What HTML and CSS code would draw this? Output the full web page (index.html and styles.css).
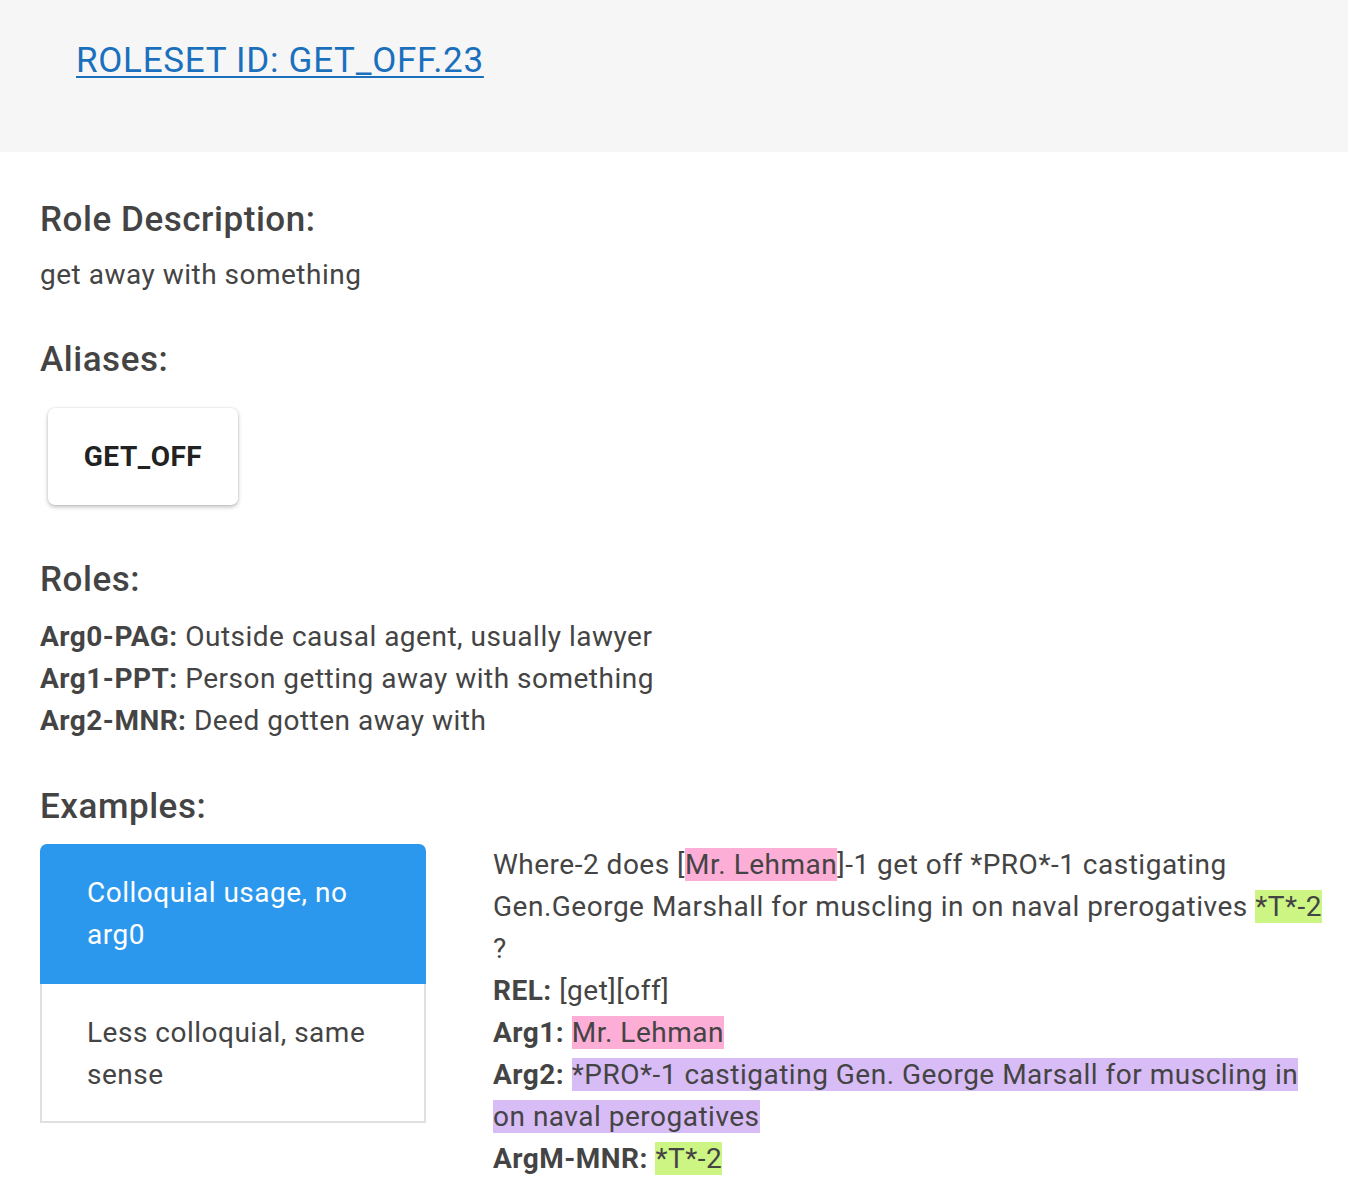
FILE: index.html
```html
<!DOCTYPE html>
<html lang="en">
<head>
<meta charset="utf-8">
<title>Roleset get_off.23</title>
<link rel="stylesheet" href="styles.css">
</head>
<body>
<header class="top">
  <a class="roleset-link" href="#">ROLESET ID: GET_OFF.23</a>
</header>
<main class="content">
  <h2 class="sec-title first">Role Description:</h2>
  <p class="desc">get away with something</p>

  <h2 class="sec-title">Aliases:</h2>
  <div class="aliases">
    <div class="alias-chip">GET_OFF</div>
  </div>

  <h2 class="sec-title roles-title">Roles:</h2>
  <ul class="roles">
    <li><b>Arg0-PAG:</b> Outside causal agent, usually lawyer</li>
    <li><b>Arg1-PPT:</b> Person getting away with something</li>
    <li><b>Arg2-MNR:</b> Deed gotten away with</li>
  </ul>

  <h2 class="sec-title examples-title">Examples:</h2>
  <div class="examples">
    <ul class="ex-list">
      <li class="ex-item active">Colloquial usage, no arg0</li>
      <li class="ex-item">Less colloquial, same sense</li>
    </ul>
    <div class="ex-body">
      <p class="ex-line">Where-2 does [<span class="hl-pink">Mr. Lehman</span>]-1 get off *PRO*-1 castigating Gen.George Marshall for muscling in on naval prerogatives <span class="hl-green">*T*-2</span> ?</p>
      <p class="ex-line"><b>REL:</b> [get][off]</p>
      <p class="ex-line"><b>Arg1:</b> <span class="hl-pink">Mr. Lehman</span></p>
      <p class="ex-line"><b>Arg2:</b> <span class="hl-purple">*PRO*-1 castigating Gen. George Marsall for muscling in on naval perogatives</span></p>
      <p class="ex-line"><b>ArgM-MNR:</b> <span class="hl-green">*T*-2</span></p>
    </div>
  </div>
</main>
</body>
</html>
```

FILE: styles.css
```css
* {
  box-sizing: border-box;
}

html, body {
  margin: 0;
  padding: 0;
  background: #ffffff;
}

body {
  font-family: Roboto, "Liberation Sans", sans-serif;
  color: #444444;
  letter-spacing: 0.5px;
}

.top {
  height: 152px;
  background: #f6f6f6;
  padding: 40px 0 0 76px;
}

.roleset-link {
  font-size: 35px;
  line-height: 42px;
  font-weight: 400;
  letter-spacing: 0.72px;
  color: #1a70bd;
  text-decoration: underline;
  text-decoration-thickness: 2px;
  text-underline-offset: 4px;
}

.content {
  padding: 0 20px 0 40px;
}

.sec-title {
  margin: 0;
  font-size: 35px;
  line-height: 42px;
  font-weight: 500;
  letter-spacing: 0.55px;
  color: #444444;
}

.sec-title.first {
  margin-top: 47px;
}

.desc {
  margin: 13px 0 43px;
  font-size: 28px;
  line-height: 42px;
}

.aliases {
  display: flex;
  margin: 27px 0 0 8px;
}

.alias-chip {
  width: 190px;
  height: 97px;
  display: flex;
  align-items: center;
  justify-content: center;
  background: #ffffff;
  border-radius: 7px;
  box-shadow: 0 2px 4px rgba(0, 0, 0, 0.25), 0 0 2px rgba(0, 0, 0, 0.12);
  font-size: 28px;
  font-weight: 700;
  color: #222222;
}

.roles-title {
  margin-top: 54px;
}

.roles {
  list-style: none;
  margin: 15px 0 44px;
  padding: 0;
  font-size: 28px;
  line-height: 42px;
}

.roles b {
  font-weight: 700;
}

.examples {
  display: flex;
  align-items: flex-start;
  gap: 67px;
  margin-top: 16px;
}

.ex-list {
  list-style: none;
  margin: 0;
  padding: 0;
  width: 386px;
  flex: none;
  font-size: 28px;
  line-height: 42px;
}

.ex-item {
  padding: 28px 40px 25px 45px;
  border: 2px solid #e0e0e0;
  border-top: none;
  color: #444444;
}

.ex-item.active {
  background: #2b98ee;
  border: 0;
  padding: 28px 40px 28px 47px;
  color: #ffffff;
  border-radius: 7px 7px 0 0;
}

.ex-body {
  width: 835px;
  font-size: 28px;
  line-height: 42px;
}

.ex-line {
  margin: 0;
}

.ex-body b {
  font-weight: 700;
}

.hl-pink {
  background: #fcaed6;
}

.hl-green {
  background: #ccf584;
}

.hl-purple {
  background: #d8bcf5;
}
```
